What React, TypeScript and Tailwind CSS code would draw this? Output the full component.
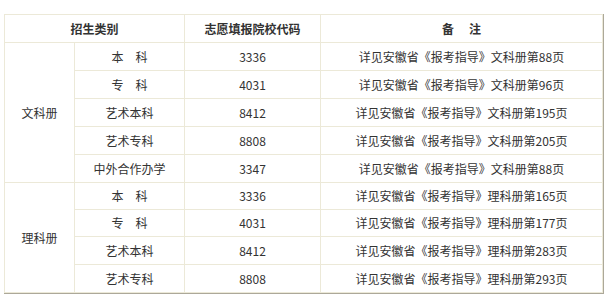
import React from "react";

interface Row {
  type: string;
  code: string;
  note: string;
  h?: string;
}

const groups: { name: string; rows: Row[] }[] = [
  {
    name: "文科册",
    rows: [
      { type: "本\u3000科", code: "3336", note: "详见安徽省《报考指导》文科册第88页" },
      { type: "专\u3000科", code: "4031", note: "详见安徽省《报考指导》文科册第96页" },
      { type: "艺术本科", code: "8412", note: "详见安徽省《报考指导》文科册第195页" },
      { type: "艺术专科", code: "8808", note: "详见安徽省《报考指导》文科册第205页" },
      { type: "中外合作办学", code: "3347", note: "详见安徽省《报考指导》文科册第88页" },
    ],
  },
  {
    name: "理科册",
    rows: [
      { type: "本\u3000科", code: "3336", note: "详见安徽省《报考指导》理科册第165页", h: "h-[27px]" },
      { type: "专\u3000科", code: "4031", note: "详见安徽省《报考指导》理科册第177页", h: "h-[27px]" },
      { type: "艺术本科", code: "8412", note: "详见安徽省《报考指导》理科册第283页" },
      { type: "艺术专科", code: "8808", note: "详见安徽省《报考指导》理科册第293页" },
    ],
  },
];

const cell = "border-r border-b border-[#ece9d8] text-center align-middle p-0";

export default function App() {
  return (
    <div className="bg-white w-[611px] h-[302px] pt-[14px] pl-[4px] text-[12px] leading-none text-[#333] [font-family:'Noto_Sans_CJK_SC','Noto_Sans',sans-serif]">
      <div className="w-[600px] border-r border-b border-[#aca899]">
        <table className="w-[599px] border-separate border-spacing-0 table-fixed border-t border-l border-[#ece9d8]">
          <colgroup>
            <col className="w-[70px]" />
            <col className="w-[110px]" />
            <col className="w-[136px]" />
            <col />
          </colgroup>
          <thead>
            <tr>
              <th colSpan={2} className={`${cell} h-[28px] font-bold`}>招生类别</th>
              <th className={`${cell} h-[28px] font-bold`}>志愿填报院校代码</th>
              <th className={`${cell} h-[28px] font-bold`}>
                备<span className="inline-block w-[15px]" />注
              </th>
            </tr>
          </thead>
          <tbody>
            {groups.map((g) =>
              g.rows.map((r, i) => {
                const h = r.h ?? "h-[28px]";
                return (
                  <tr key={g.name + i}>
                    {i === 0 && (
                      <td rowSpan={g.rows.length} className={cell}>
                        {g.name}
                      </td>
                    )}
                    <td className={`${cell} ${h}`}>{r.type}</td>
                    <td className={`${cell} ${h}`}>{r.code}</td>
                    <td className={`${cell} ${h}`}>{r.note}</td>
                  </tr>
                );
              })
            )}
          </tbody>
        </table>
      </div>
    </div>
  );
}
